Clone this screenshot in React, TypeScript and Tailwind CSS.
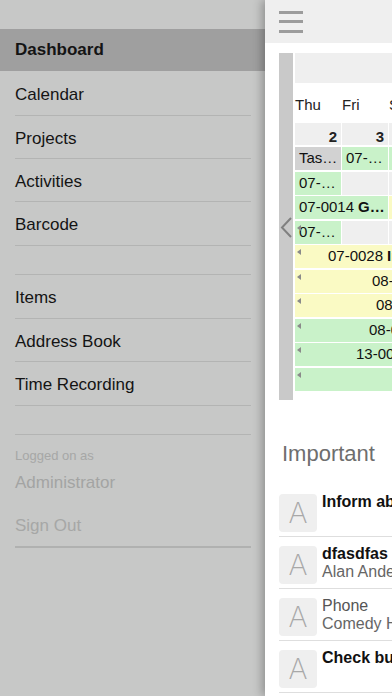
import React from "react";

const Tri = () => (
  <svg className="absolute left-[2px] top-[4px]" width="4" height="6" viewBox="0 0 4 6">
    <polygon points="4,0 4,6 0,3" fill="#8a8a8a" />
  </svg>
);

const menuTop = [
  { label: "Calendar", h: "h-[45px]" },
  { label: "Projects", h: "h-[43px]" },
  { label: "Activities", h: "h-[43px]" },
  { label: "Barcode", h: "h-[44px]" },
];
const menuBottom = [
  { label: "Items", h: "h-[44px]" },
  { label: "Address Book", h: "h-[43px]" },
  { label: "Time Recording", h: "h-[44px]" },
];

function Sidebar() {
  return (
    <div className="w-[265px] shrink-0 bg-[#c7c8c7] h-[696px] font-['Liberation_Sans',Arial,sans-serif]">
      <div className="h-[29px]" />
      <div className="h-[42px] bg-[#9f9f9f] flex items-center pl-[15px] text-[17px] font-bold text-[#141414]">
        Dashboard
      </div>
      {menuTop.map((m) => (
        <div key={m.label} className="pl-[15px] pr-[14px]">
          <div className={`${m.h} border-b border-[#b3b4b3] flex items-center pt-[3px] text-[17px] text-[#141414]`}>
            {m.label}
          </div>
        </div>
      ))}
      <div className="pl-[15px] pr-[14px]">
        <div className="h-[29px] border-b border-[#b3b4b3]" />
      </div>
      {menuBottom.map((m) => (
        <div key={m.label} className="pl-[15px] pr-[14px]">
          <div className={`${m.h} border-b border-[#b3b4b3] flex items-center pt-[3px] text-[17px] text-[#141414]`}>
            {m.label}
          </div>
        </div>
      ))}
      <div className="pl-[15px] pr-[14px]">
        <div className="h-[29px] border-b border-[#b3b4b3]" />
      </div>
      <div className="pl-[15px] pr-[14px]">
        <div className="h-[113px] border-b-2 border-[#b0b1b0] flex flex-col">
          <div className="mt-[13px] text-[13px] leading-[16px] text-[#a6a7a6]">Logged on as</div>
          <div className="mt-[9px] text-[17px] leading-[20px] text-[#a3a4a3]">Administrator</div>
          <div className="mt-[23px] text-[17px] leading-[20px] text-[#a6a7a6]">Sign Out</div>
        </div>
      </div>
    </div>
  );
}

function Cell({
  w = "w-[46px]",
  bg,
  children,
  tri,
  pl = "pl-[4px]",
}: {
  w?: string;
  bg: string;
  children?: React.ReactNode;
  tri?: boolean;
  pl?: string;
}) {
  return (
    <div className={`relative ${w} shrink-0 ${bg} ${pl} h-full flex items-center whitespace-nowrap overflow-hidden text-[15px] text-[#111]`}>
      {tri && <Tri />}
      {children}
    </div>
  );
}

function Calendar() {
  const green = "bg-[#c9f2c9]";
  const yellow = "bg-[#fafac4]";
  const gray = "bg-[#efefef]";
  const rowCls = "flex gap-[1px] h-[23px]";
  return (
    <div className="flex gap-[2px] mt-[10px] ml-[14px] h-[347px]">
      <div className="relative w-[14px] shrink-0 bg-[#c9c9c9] h-full">
        <svg className="absolute left-[1px] top-[164px]" width="13" height="21" viewBox="0 0 13 21">
          <polyline points="11,1 2,10.5 11,20" fill="none" stroke="#808080" strokeWidth="2" />
        </svg>
      </div>
      <div className="flex flex-col w-[420px]">
        <div className={`h-[30px] ${gray}`} />
        <div className="h-[40px] flex items-center pt-[4px] text-[15px] text-[#222]">
          <div className="w-[47px]">Thu</div>
          <div className="w-[47px]">Fri</div>
          <div className="w-[47px]">Sat</div>
        </div>
        <div className="flex gap-[1px] h-[22px]">
          {["2", "3", "4"].map((d) => (
            <div key={d} className={`w-[46px] ${gray} flex items-end justify-end pr-[4px] text-[15px] leading-[16px] font-bold text-[#222]`}>
              {d}
            </div>
          ))}
        </div>
        <div className="flex flex-col gap-[1.5px] mt-[2px]">
          <div className={rowCls}>
            <Cell bg="bg-[#d2d2d2]">Tas…</Cell>
            <Cell bg={green}>07-…</Cell>
            <Cell bg={green}>07-…</Cell>
          </div>
          <div className={rowCls}>
            <Cell bg={green}>07-…</Cell>
            <Cell bg={gray} />
            <Cell bg={gray} />
          </div>
          <div className={rowCls}>
            <Cell w="w-[93px]" bg={green}>
              07-0014 <b className="ml-[4px]">G…</b>
            </Cell>
            <Cell bg={yellow} />
          </div>
          <div className={rowCls}>
            <Cell bg={green} tri>07-…</Cell>
            <Cell bg={gray} />
            <Cell bg={gray} />
          </div>
          <div className={rowCls}>
            <Cell w="w-[300px]" bg={yellow} tri pl="pl-[33px]">
              07-0028 <b className="ml-[4px]">Installation</b>
            </Cell>
          </div>
          <div className={rowCls}>
            <Cell w="w-[300px]" bg={yellow} tri pl="pl-[77px]">08-0031</Cell>
          </div>
          <div className={rowCls}>
            <Cell w="w-[300px]" bg={yellow} tri pl="pl-[81px]">0806</Cell>
          </div>
          <div className={rowCls}>
            <Cell w="w-[300px]" bg={green} tri pl="pl-[74px]">08-0042</Cell>
          </div>
          <div className={rowCls}>
            <Cell w="w-[300px]" bg={green} tri pl="pl-[61px]">13-0001</Cell>
          </div>
          <div className={rowCls}>
            <Cell w="w-[300px]" bg={green} tri />
          </div>
        </div>
      </div>
    </div>
  );
}

const items = [
  { title: "Inform about", bold: true },
  { title: "dfasdfas", bold: true, sub: "Alan Anderson" },
  { title: "Phone", bold: false, sub: "Comedy House" },
  { title: "Check business", bold: true },
];

function Important() {
  return (
    <div className="ml-[14px]">
      <div className="mt-[41px] ml-[3px] h-[26px] text-[22px] leading-[26px] text-[#6e6e6e]">Important</div>
      <div className="mt-[18px] flex flex-col">
        {items.map((it) => (
          <div key={it.title} className="h-[52px] border-b border-[#dedede] flex gap-[5px]">
            <div className="mt-[9px] w-[38px] h-[38px] shrink-0 rounded-[4px] bg-[#efefef] flex items-center justify-center text-[29px] font-['Inter',sans-serif] font-extralight text-[#a8a8a8]">
              A
            </div>
            <div className="pt-[8px] flex flex-col whitespace-nowrap">
              <div className={`text-[16px] leading-[18px] ${it.bold ? "font-bold text-[#111]" : "text-[#555]"}`}>{it.title}</div>
              {it.sub && <div className="text-[16px] leading-[18px] text-[#666]">{it.sub}</div>}
            </div>
          </div>
        ))}
      </div>
    </div>
  );
}

export default function App() {
  return (
    <div className="w-[392px] h-[696px] flex overflow-hidden bg-white font-['Liberation_Sans',Arial,sans-serif]">
      <Sidebar />
      <div className="relative z-10 flex-1 min-w-0 bg-white overflow-hidden shadow-[-3px_0_9px_rgba(0,0,0,0.28)]">
        <div className="w-[500px]">
          <div className="h-[43px] bg-[#efefef] flex flex-col justify-center gap-[6.5px] pl-[14px]">
            <div className="w-[24px] h-[3px] bg-[#9c9c9c]" />
            <div className="w-[24px] h-[3px] bg-[#9c9c9c]" />
            <div className="w-[24px] h-[3px] bg-[#9c9c9c]" />
          </div>
          <Calendar />
          <Important />
        </div>
      </div>
    </div>
  );
}
